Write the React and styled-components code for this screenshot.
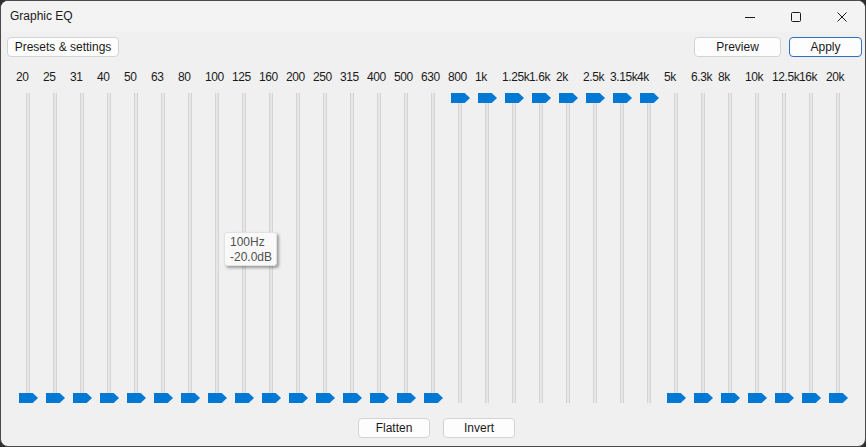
import React from "react";
import styled, { createGlobalStyle } from "styled-components";

const GlobalStyle = createGlobalStyle`
  html, body {
    margin: 0;
    padding: 0;
    background: #2d2d2d;
  }
  * {
    box-sizing: border-box;
  }
`;

const BANDS = [
  "20", "25", "31", "40", "50", "63", "80", "100", "125", "160", "200",
  "250", "315", "400", "500", "630", "800", "1k", "1.25k", "1.6k", "2k",
  "2.5k", "3.15k", "4k", "5k", "6.3k", "8k", "10k", "12.5k", "16k", "20k",
];

// gain in dB, +20 at the top, -20 at the bottom
const gains = BANDS.map((_, i) => (i >= 16 && i <= 23 ? 20 : -20));

const Window = styled.div`
  width: 866px;
  height: 447px;
  display: flex;
  flex-direction: column;
  background: #f0f0f0;
  border: 1px solid #4a4a4a;
  border-radius: 8px;
  overflow: hidden;
  font-family: "Segoe UI", "Liberation Sans", Arial, sans-serif;
  font-size: 12px;
  color: #1b1b1b;
  position: relative;
`;

const TitleBar = styled.div`
  height: 31px;
  display: flex;
  align-items: center;
  padding-left: 9px;
  background: #f3f3f3;
  flex-shrink: 0;
`;

const Title = styled.div`
  flex: 1;
  font-size: 12px;
  color: #1a1a1a;
  padding-bottom: 1px;
`;

const Controls = styled.div`
  display: flex;
  height: 100%;
`;

const ControlButton = styled.div`
  width: 46px;
  height: 100%;
  display: flex;
  align-items: center;
  justify-content: center;
  color: #1a1a1a;
`;

const Toolbar = styled.div`
  display: flex;
  align-items: center;
  padding: 5px 3px 0 6px;
  gap: 8px;
  flex-shrink: 0;
`;

const Spacer = styled.div`
  flex: 1;
`;

const Button = styled.div`
  height: 20px;
  width: ${(p) => p.w}px;
  display: flex;
  align-items: center;
  justify-content: center;
  background: #fdfdfd;
  border: 1px solid ${(p) => (p.primary ? "#2f6fbf" : "#d3d3d3")};
  border-radius: 4px;
  font-size: 12px;
  color: #1a1a1a;
  padding-bottom: 1px;
`;

const Bands = styled.div`
  display: flex;
  padding-left: 13px;
  flex-shrink: 0;
`;

const Band = styled.div`
  width: 27px;
  display: flex;
  flex-direction: column;
`;

const Label = styled.div`
  height: 20px;
  line-height: 20px;
  margin-top: 10px;
  padding-left: 2px;
  white-space: nowrap;
  overflow: visible;
  font-size: 12px;
  letter-spacing: -0.4px;
`;

const Slider = styled.div`
  position: relative;
  height: 310px;
  margin-top: 6px;
`;

const Track = styled.div`
  margin-left: 12px;
  width: 4px;
  height: 100%;
  background: #e6e6e6;
  border-left: 1px solid #d4d4d4;
  border-right: 1px solid #d4d4d4;
`;

const Thumb = styled.div`
  position: absolute;
  left: 5px;
  width: 19px;
  height: 10px;
  background: #0078d4;
  clip-path: polygon(0 0, 72% 0, 100% 50%, 72% 100%, 0 100%);
`;

const Tooltip = styled.div`
  position: absolute;
  left: 223px;
  top: 231px;
  width: 53px;
  height: 34px;
  padding: 2px 0 0 5px;
  background: #f9f9f9;
  border: 1px solid #e2e2e2;
  border-radius: 3px;
  box-shadow: 2px 2px 3px rgba(0, 0, 0, 0.35);
  color: #505050;
  font-size: 12px;
  line-height: 15px;
`;

const Footer = styled.div`
  display: flex;
  justify-content: center;
  gap: 13px;
  margin-top: 15px;
  padding-left: 7px;
`;

const EQSlider = ({ gain }) => {
  const top = ((20 - gain) / 40) * 300;
  return (
    <Slider>
      <Track />
      <Thumb style={{ top }} />
    </Slider>
  );
};

const App = () => {
  return (
    <>
      <GlobalStyle />
      <Window>
        <TitleBar>
          <Title>Graphic EQ</Title>
          <Controls>
            <ControlButton>
              <svg width="10" height="10" viewBox="0 0 10 10">
                <path d="M0 5.5h10" stroke="currentColor" strokeWidth="1" />
              </svg>
            </ControlButton>
            <ControlButton>
              <svg width="10" height="10" viewBox="0 0 10 10">
                <rect x="0.5" y="0.5" width="9" height="9" rx="1" fill="none" stroke="currentColor" strokeWidth="1" />
              </svg>
            </ControlButton>
            <ControlButton>
              <svg width="10" height="10" viewBox="0 0 10 10">
                <path d="M0.5 0.5L9.5 9.5M9.5 0.5L0.5 9.5" stroke="currentColor" strokeWidth="1" />
              </svg>
            </ControlButton>
          </Controls>
        </TitleBar>
        <Toolbar>
          <Button w={112}>Presets &amp; settings</Button>
          <Spacer />
          <Button w={87}>Preview</Button>
          <Button w={73} primary>Apply</Button>
        </Toolbar>
        <Bands>
          {BANDS.map((b, i) => (
            <Band key={b}>
              <Label>{b}</Label>
              <EQSlider gain={gains[i]} />
            </Band>
          ))}
        </Bands>
        <Footer>
          <Button w={72}>Flatten</Button>
          <Button w={72}>Invert</Button>
        </Footer>
        <Tooltip>
          100Hz
          <br />
          -20.0dB
        </Tooltip>
      </Window>
    </>
  );
};

export default App;
